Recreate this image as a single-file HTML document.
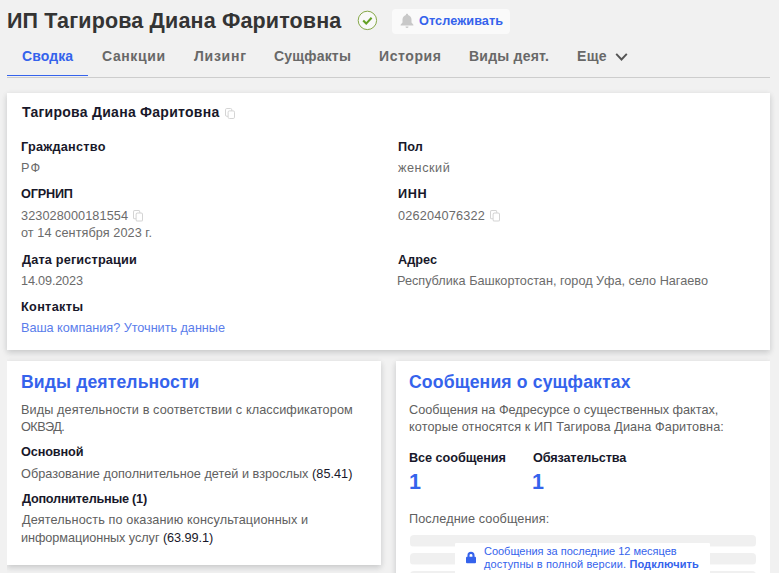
<!DOCTYPE html>
<html lang="ru"><head><meta charset="utf-8">
<style>
*{box-sizing:border-box;margin:0;padding:0}
html,body{width:779px;height:573px;overflow:hidden;background:#f1f1f1;font-family:"Liberation Sans",sans-serif}
.abs{position:absolute}
.t{position:absolute;white-space:nowrap;line-height:20px}
.card{position:absolute;background:#fff;box-shadow:0 3px 6px rgba(20,30,40,.13),0 1px 6px rgba(0,0,0,.07)}
.bar{position:absolute;left:409.500px;width:346.500px;height:12px;background:linear-gradient(to bottom,#f0f0f0 11px,#f8f8f8 11px);border-radius:4px}
</style></head><body>

<div class="abs" style="left:392px;top:9px;width:118px;height:25px;background:#fafafa;border-radius:4px"></div>
<svg class="abs" style="left:357px;top:10px" width="21" height="21" viewBox="0 0 21 21"><circle cx="10.400" cy="10.400" r="9.200" fill="#f9f9f9" stroke="#86a848" stroke-width="1"/><path d="M6.200 10.600l3 3 5.400-5.800" fill="none" stroke="#64a024" stroke-width="2.100"/></svg>
<svg class="abs" style="left:400px;top:13px" width="14" height="16" viewBox="0 0 14 16"><path d="M7 .8c-.7 0-1.100.5-1.100 1.100C3.900 2.500 2.500 4.300 2.500 6.400v3L.6 11.800v.7h12.800v-.7l-1.900-2.400v-3c0-2.100-1.400-3.900-3.400-4.500C8.100 1.300 7.700.8 7 .8z" fill="#c8c8c8"/><path d="M5.500 13.500h3a1.500 1.500 0 0 1-3 0z" fill="#c8c8c8"/></svg>
<svg class="abs" style="left:614px;top:52px" width="15" height="11" viewBox="0 0 15 11"><path d="M2.200 1.800l5.300 5.700 5.300-5.700" fill="none" stroke="#555" stroke-width="1.900"/></svg>
<div class="abs" style="left:7px;top:77px;width:763px;height:1px;background:#cdcdcd"></div>
<div class="abs" style="left:7px;top:75px;width:81px;height:1px;background:#3563ec"></div>
<div class="abs" style="left:0;top:0;width:776px;height:573px;overflow:hidden"><div class="card" style="left:7px;top:93px;width:763px;height:257px"></div></div>
<div class="abs" style="left:7px;top:351px;width:763px;height:222px;overflow:hidden"><div class="card" style="left:0;top:10px;width:374px;height:204px"></div>
<div class="card" style="left:389px;top:10px;width:374px;height:230px"></div></div>
<div class="bar" style="top:535px"></div>
<div class="bar" style="top:553px"></div>
<div class="bar" style="top:571px"></div>
<div class="abs" style="left:455px;top:543px;width:255px;height:34px;background:#fff;border-radius:1px"></div>
<svg class="abs" style="left:465px;top:551.300px" width="12" height="13" viewBox="0 0 12 13"><rect x="1" y="5.700" width="10" height="6.500" rx="1" fill="#3563ec"/><path d="M3.500 6V4.400a2.500 2.500 0 0 1 5 0V6" fill="none" stroke="#3563ec" stroke-width="2.100"/></svg>
<svg class="abs" style="left:225px;top:108px" width="10" height="11" viewBox="0 0 10 11" preserveAspectRatio="none"><rect x="0.5" y="0.5" width="6.300" height="7.800" rx="1.300" fill="#fff" stroke="#d4d4d4" stroke-width="1"/><rect x="3.100" y="2.900" width="6.400" height="7.600" rx="1.300" fill="#fff" stroke="#d4d4d4" stroke-width="1"/></svg><svg class="abs" style="left:133px;top:210px" width="10" height="11.6" viewBox="0 0 10 11" preserveAspectRatio="none"><rect x="0.5" y="0.5" width="6.300" height="7.800" rx="1.300" fill="#fff" stroke="#d4d4d4" stroke-width="1"/><rect x="3.100" y="2.900" width="6.400" height="7.600" rx="1.300" fill="#fff" stroke="#d4d4d4" stroke-width="1"/></svg><svg class="abs" style="left:490px;top:210px" width="10" height="11.6" viewBox="0 0 10 11" preserveAspectRatio="none"><rect x="0.5" y="0.5" width="6.300" height="7.800" rx="1.300" fill="#fff" stroke="#d4d4d4" stroke-width="1"/><rect x="3.100" y="2.900" width="6.400" height="7.600" rx="1.300" fill="#fff" stroke="#d4d4d4" stroke-width="1"/></svg>
<div id="title" class="t" style="left:7.00px;top:10.71px;font-size:21.50px;font-weight:bold;color:#343434;letter-spacing:0.152px">ИП Тагирова Диана Фаритовна</div>
<div id="btn" class="t" style="left:419.00px;top:11.00px;font-size:12.70px;font-weight:bold;color:#3563ec;letter-spacing:0.084px">Отслеживать</div>
<div id="t1" class="t" style="left:22.00px;top:46.31px;font-size:14.00px;font-weight:bold;color:#3563ec;letter-spacing:0.114px">Сводка</div>
<div id="t2" class="t" style="left:102.00px;top:46.31px;font-size:14.00px;font-weight:bold;color:#686868;letter-spacing:0.607px">Санкции</div>
<div id="t3" class="t" style="left:194.00px;top:46.31px;font-size:14.00px;font-weight:bold;color:#686868;letter-spacing:0.740px">Лизинг</div>
<div id="t4" class="t" style="left:274.00px;top:46.31px;font-size:14.00px;font-weight:bold;color:#686868;letter-spacing:0.186px">Сущфакты</div>
<div id="t5" class="t" style="left:379.00px;top:46.31px;font-size:14.00px;font-weight:bold;color:#686868;letter-spacing:0.591px">История</div>
<div id="t6" class="t" style="left:469.00px;top:46.31px;font-size:14.00px;font-weight:bold;color:#686868;letter-spacing:0.229px">Виды деят.</div>
<div id="t7" class="t" style="left:577.00px;top:46.31px;font-size:14.00px;font-weight:bold;color:#686868;letter-spacing:0.346px">Еще</div>
<div id="name" class="t" style="left:22.00px;top:102.01px;font-size:14.00px;font-weight:bold;color:#18182a;letter-spacing:0.264px">Тагирова Диана Фаритовна</div>
<div id="l1" class="t" style="left:21.00px;top:137.11px;font-size:12.70px;font-weight:bold;color:#18182a;letter-spacing:0.244px">Гражданство</div>
<div id="v1" class="t" style="left:21.00px;top:158.11px;font-size:12.70px;color:#6b6b6b;letter-spacing:1.256px">РФ</div>
<div id="l2" class="t" style="left:21.00px;top:184.31px;font-size:12.70px;font-weight:bold;color:#18182a;letter-spacing:-0.190px">ОГРНИП</div>
<div id="v2" class="t" style="left:21.00px;top:206.31px;font-size:12.70px;color:#6b6b6b;letter-spacing:0.080px">323028000181554</div>
<div id="v2b" class="t" style="left:21.00px;top:223.31px;font-size:12.70px;color:#6b6b6b;letter-spacing:0.059px">от 14 сентября 2023 г.</div>
<div id="l3" class="t" style="left:22.00px;top:249.71px;font-size:12.70px;font-weight:bold;color:#18182a;letter-spacing:0.169px">Дата регистрации</div>
<div id="v3" class="t" style="left:21.00px;top:271.21px;font-size:12.70px;color:#6b6b6b;letter-spacing:-0.173px">14.09.2023</div>
<div id="l4" class="t" style="left:21.00px;top:297.21px;font-size:12.70px;font-weight:bold;color:#18182a;letter-spacing:0.320px">Контакты</div>
<div id="v4" class="t" style="left:21.00px;top:318.21px;font-size:12.70px;color:#5a7deb;letter-spacing:-0.037px">Ваша компания? Уточнить данные</div>
<div id="l5" class="t" style="left:398.00px;top:137.11px;font-size:12.70px;font-weight:bold;color:#18182a;letter-spacing:0.099px">Пол</div>
<div id="v5" class="t" style="left:398.00px;top:158.11px;font-size:12.70px;color:#6b6b6b;letter-spacing:0.527px">женский</div>
<div id="l6" class="t" style="left:398.00px;top:184.31px;font-size:12.70px;font-weight:bold;color:#18182a;letter-spacing:0.575px">ИНН</div>
<div id="v6" class="t" style="left:398.00px;top:206.31px;font-size:12.70px;color:#6b6b6b;letter-spacing:0.183px">026204076322</div>
<div id="l7" class="t" style="left:398.00px;top:249.71px;font-size:12.70px;font-weight:bold;color:#18182a;letter-spacing:0.006px">Адрес</div>
<div id="v7" class="t" style="left:397.00px;top:271.21px;font-size:12.70px;color:#6b6b6b;letter-spacing:-0.010px">Республика Башкортостан, город Уфа, село Нагаево</div>
<div id="h1" class="t" style="left:21.00px;top:372.31px;font-size:17.60px;font-weight:bold;color:#3563ec;letter-spacing:0.114px">Виды деятельности</div>
<div id="p1a" class="t" style="left:21.00px;top:400.21px;font-size:12.70px;color:#606060;letter-spacing:0.088px">Виды деятельности в соответствии с классификатором</div>
<div id="p1b" class="t" style="left:21.00px;top:417.01px;font-size:12.70px;color:#606060;letter-spacing:-0.550px">ОКВЭД.</div>
<div id="l8" class="t" style="left:21.00px;top:442.11px;font-size:12.70px;font-weight:bold;color:#18182a;letter-spacing:-0.128px">Основной</div>
<div id="p2" class="t" style="left:21.00px;top:464.11px;font-size:12.70px;color:#606060;letter-spacing:0.024px">Образование дополнительное детей и взрослых <span style="color:#18182a">(85.41)</span></div>
<div id="l9" class="t" style="left:22.00px;top:489.40px;font-size:12.70px;font-weight:bold;color:#18182a;letter-spacing:-0.245px">Дополнительные (1)</div>
<div id="p3a" class="t" style="left:22.00px;top:510.00px;font-size:12.70px;color:#606060;letter-spacing:0.102px">Деятельность по оказанию консультационных и</div>
<div id="p3b" class="t" style="left:21.00px;top:528.01px;font-size:12.70px;color:#606060;letter-spacing:-0.065px">информационных услуг <span style="color:#18182a">(63.99.1)</span></div>
<div id="h2" class="t" style="left:409.00px;top:372.31px;font-size:17.60px;font-weight:bold;color:#3563ec;letter-spacing:0.151px">Сообщения о сущфактах</div>
<div id="p4a" class="t" style="left:409.00px;top:400.21px;font-size:12.70px;color:#606060;letter-spacing:-0.007px">Сообщения на Федресурсе о существенных фактах,</div>
<div id="p4b" class="t" style="left:409.00px;top:417.01px;font-size:12.70px;color:#606060;letter-spacing:0.091px">которые относятся к ИП Тагирова Диана Фаритовна:</div>
<div id="l10" class="t" style="left:409.00px;top:448.21px;font-size:12.70px;font-weight:bold;color:#18182a;letter-spacing:-0.068px">Все сообщения</div>
<div id="l11" class="t" style="left:533.00px;top:448.21px;font-size:12.70px;font-weight:bold;color:#18182a;letter-spacing:-0.156px">Обязательства</div>
<div id="n1" class="t" style="left:409.00px;top:471.71px;font-size:21.50px;font-weight:bold;color:#3563ec;letter-spacing:0.000px">1</div>
<div id="n2" class="t" style="left:532.00px;top:471.71px;font-size:21.50px;font-weight:bold;color:#3563ec;letter-spacing:0.000px">1</div>
<div id="p5" class="t" style="left:409.00px;top:509.21px;font-size:12.70px;color:#606060;letter-spacing:0.089px">Последние сообщения:</div>
<div id="o1" class="t" style="left:484.00px;top:540.81px;font-size:11.00px;color:#3563ec;letter-spacing:-0.020px">Сообщения за последние 12 месяцев</div>
<div id="o2" class="t" style="left:484.00px;top:553.81px;font-size:11.00px;color:#3563ec;letter-spacing:0.126px">доступны в полной версии. <b>Подключить</b></div>
</body></html>
